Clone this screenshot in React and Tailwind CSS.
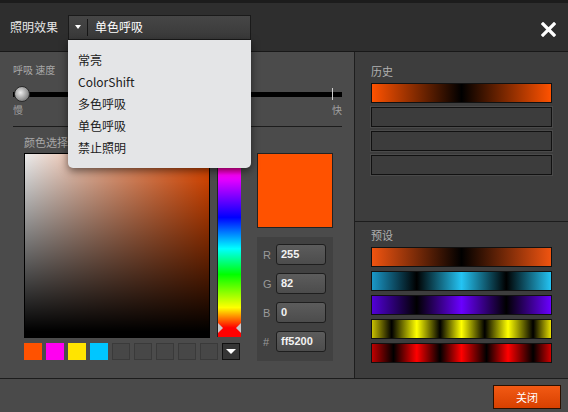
const swatches = ['bg-[#ff5200]', 'bg-[#ff00f0]', 'bg-[#ffe400]', 'bg-[#00c6ff]']

const presets = [
  'bg-[linear-gradient(to_right,#f05410,#000_50%,#f05410)]',
  'bg-[linear-gradient(to_right,#1a98c8,#000_25%,#24c4f4_50%,#000_75%,#24c4f4)]',
  'bg-[linear-gradient(to_right,#5200d8,#000_25%,#6a00ff_50%,#000_75%,#6a00ff)]',
  'bg-[linear-gradient(to_right,#c8c000,#000_11%,#ffff00_25%,#000_38%,#ffff00_50%,#000_63%,#ffff00_76%,#000_90%,#e8e000)]',
  'bg-[linear-gradient(to_right,#c00000,#000_12%,#ff0000_25%,#000_38%,#ff0000_50%,#000_64%,#ff0000_76%,#000_90%,#d00000)]',
]

const menuItems = ['常亮', 'ColorShift', '多色呼吸', '单色呼吸', '禁止照明']

export default function App() {
  return (
    <div className="w-[568px] h-[412px] flex flex-col bg-[#4a4a4a] overflow-hidden font-['Noto_Sans_CJK_SC','Liberation_Sans',sans-serif]">
      <div className="h-[3px] bg-[#1c1c1c]" />

      {/* 标题栏 */}
      <div className="h-[49px] flex items-center pl-[10px] pr-[12px] bg-[#2e2e2e] border-b border-[#181818] relative z-10">
        <span className="text-[12px] leading-[12px] text-[#e6e6e6]">照明效果</span>
        <div className="relative ml-[10px]">
          <div className="w-[183px] h-[25px] flex items-center border border-[#1a1a1a] bg-[linear-gradient(#464646,#393939)]">
            <span className="w-[18px] flex justify-center">
              <span className="w-0 h-0 border-l-[3px] border-r-[3px] border-t-[4px] border-l-transparent border-r-transparent border-t-white" />
            </span>
            <span className="w-px h-[17px] bg-[#161616]" />
            <span className="ml-[7px] text-[12px] leading-[12px] text-white">单色呼吸</span>
          </div>
          <div className="absolute left-0 top-full w-[183px] h-[128px] pt-[9px] pl-[10px] bg-[#e4e5e7] rounded-b-[5px] shadow-[0_3px_8px_rgba(0,0,0,0.55)]">
            {menuItems.map((item) => (
              <div key={item} className="h-[22px] flex items-center text-[12px] leading-[12px] text-[#202020]">
                {item}
              </div>
            ))}
          </div>
        </div>
        <svg width="15" height="15" viewBox="0 0 15 15" className="ml-auto mt-[4px]">
          <path d="M2 2l11 11M13 2L2 13" stroke="#fff" strokeWidth="3.2" strokeLinecap="square" />
        </svg>
      </div>

      {/* 主体 */}
      <div className="h-[326px] flex">
        {/* 左侧 */}
        <div className="w-[354px] flex flex-col bg-[#4b4b4b]">
          <div className="mt-[12px] ml-[13px] text-[10px] leading-[12px] text-[#a8a8a8]">呼吸 速度</div>
          <div className="relative mt-[10px] ml-[13px] w-[329px] h-[16px] flex items-center">
            <div className="w-full h-[5px] bg-black" />
            <div className="absolute left-[1px] top-0 w-[16px] h-[16px] rounded-full border border-[#2a2a2a] bg-[radial-gradient(circle_at_40%_40%,#ececec,#9a9a9a_55%,#555)]" />
            <div className="absolute left-[319px] top-[2px] w-px h-[12px] bg-[#cfcfcf]" />
          </div>
          <div className="mt-[2px] ml-[13px] w-[329px] flex justify-between text-[10px] leading-[12px] text-[#a0a0a0]">
            <span>慢</span>
            <span>快</span>
          </div>
          <div className="mt-[10px] ml-[13px] w-[329px] h-px bg-[#1c1c1c]" />
          <div className="mt-[9px] ml-[24px] text-[11px] leading-[12px] text-[#a8a8a8]">颜色选择器</div>

          <div className="mt-[5px] ml-[24px] flex">
            <div className="flex flex-col">
              <div className="flex">
                <div className="w-[186px] h-[185px] border border-black bg-[linear-gradient(to_bottom,rgba(0,0,0,0.08),#000_97%),linear-gradient(to_right,#fff,#ff5200)]" />
                <div className="relative ml-[7px] w-[24px] h-[184px] border-l border-[#222] bg-[linear-gradient(to_bottom,#f00,#f0f_12%,#00f_35%,#0ff_52%,#0f0_66%,#ff0_84%,#f00_95%)]">
                  <span className="absolute left-0 top-[170px] w-0 h-0 border-t-[5px] border-b-[5px] border-l-[5px] border-t-transparent border-b-transparent border-l-[#c8c8c8]" />
                  <span className="absolute right-0 top-[170px] w-0 h-0 border-t-[5px] border-b-[5px] border-r-[5px] border-t-transparent border-b-transparent border-r-[#c8c8c8]" />
                </div>
              </div>
              <div className="mt-[5px] flex gap-[4px]">
                {swatches.map((c) => (
                  <div key={c} className={`w-[18px] h-[17px] ${c}`} />
                ))}
                {[0, 1, 2, 3, 4].map((i) => (
                  <div key={i} className="w-[18px] h-[17px] bg-[#474747] border border-[#3a3a3a]" />
                ))}
                <div className="w-[18px] h-[17px] flex items-center justify-center bg-[#353535] border border-[#111]">
                  <span className="w-0 h-0 border-l-[5px] border-r-[5px] border-t-[5px] border-l-transparent border-r-transparent border-t-white" />
                </div>
              </div>
            </div>

            <div className="ml-[16px] flex flex-col">
              <div className="w-[76px] h-[75px] border border-[#222] bg-[#ff5200]" />
              <div className="mt-[9px] w-[76px] h-[124px] bg-[#414141] pt-[7px] flex flex-col gap-[8px]">
                {[
                  ['R', '255'],
                  ['G', '82'],
                  ['B', '0'],
                  ['#', 'ff5200'],
                ].map(([label, value]) => (
                  <div key={label} className="flex items-center">
                    <span className="w-[19px] pl-[6px] text-[11px] leading-[12px] text-[#9a9a9a] font-['Liberation_Sans',sans-serif]">
                      {label}
                    </span>
                    <div className="w-[50px] h-[21px] flex items-center pl-[4px] rounded-[3px] border border-[#1e1e1e] bg-[linear-gradient(#5c5c5c,#4c4c4c)] text-[11px] font-bold text-[#f2f2f2] font-['Liberation_Sans',sans-serif]">
                      {value}
                    </div>
                  </div>
                ))}
              </div>
            </div>
          </div>
        </div>

        {/* 右侧 */}
        <div className="flex-1 flex flex-col border-l border-[#1e1e1e] bg-[#3d3d3d]">
          <div className="h-[170px] pl-[16px] pt-[13px] border-b border-[#1c1c1c]">
            <div className="text-[11px] leading-[12px] text-[#b0b0b0]">历史</div>
            <div className="mt-[6px] flex flex-col gap-[4px]">
              <div className="w-[181px] h-[20px] border border-[#111] bg-[linear-gradient(to_right,#ff5200,#000_50%,#ff5200)]" />
              {[0, 1, 2].map((i) => (
                <div key={i} className="w-[181px] h-[20px] border border-[#111] bg-[#3c3c3c] shadow-[0_0_0_1px_#4a4a4a]" />
              ))}
            </div>
          </div>
          <div className="flex-1 pl-[16px] pt-[7px]">
            <div className="text-[11px] leading-[12px] text-[#b0b0b0]">预设</div>
            <div className="mt-[6px] flex flex-col gap-[4px]">
              {presets.map((p) => (
                <div key={p} className={`w-[181px] h-[20px] border border-[#111] ${p}`} />
              ))}
            </div>
          </div>
        </div>
      </div>

      {/* 底部 */}
      <div className="h-[34px] flex justify-end pt-[6px] pr-[7px] border-t border-[#1c1c1c] bg-[#4a4a4a]">
        <button className="w-[68px] h-[24px] flex items-center justify-center border border-[#2a1000] bg-[linear-gradient(#f25a14,#d84000)] text-[11px] leading-[12px] text-white">
          关闭
        </button>
      </div>
    </div>
  )
}
